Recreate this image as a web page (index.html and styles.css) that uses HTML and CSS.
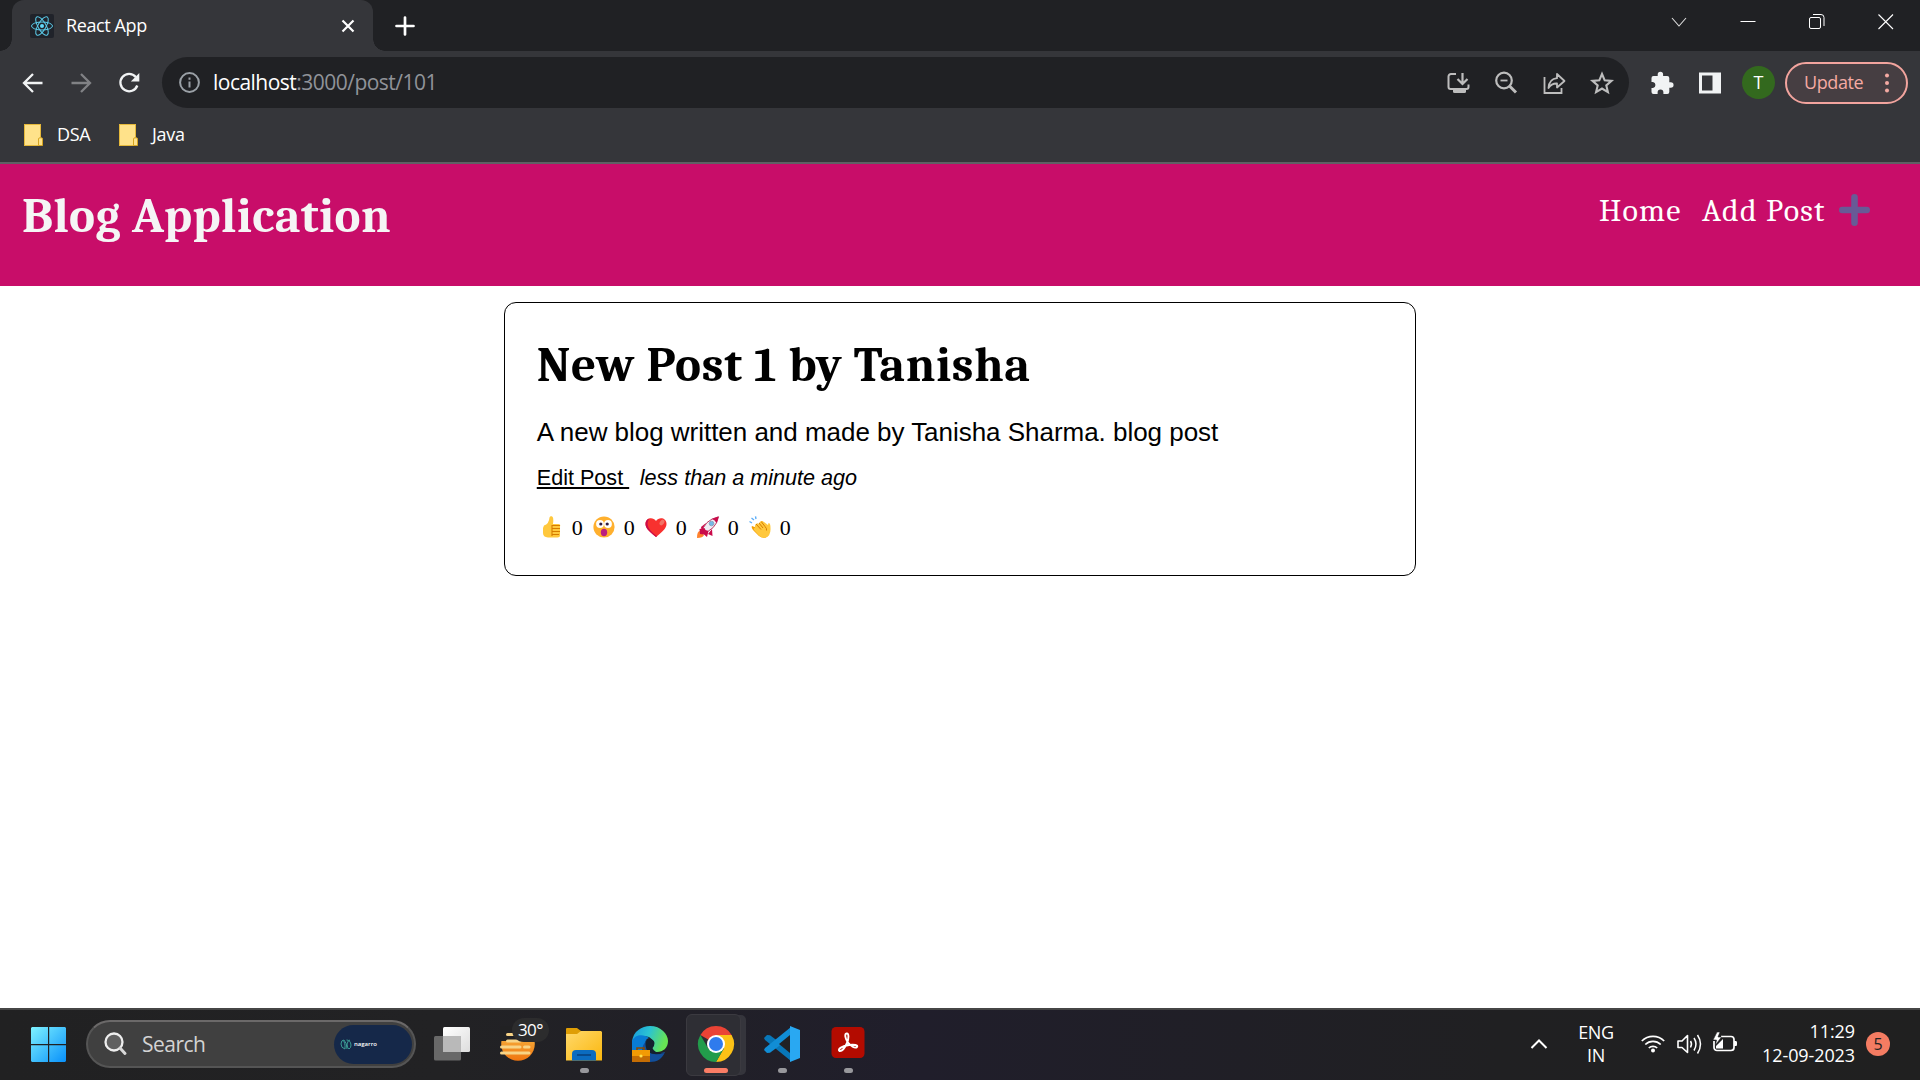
FILE: index.html
```html
<!DOCTYPE html>
<html lang="en">
<head>
<meta charset="utf-8">
<title>React App</title>
<link rel="stylesheet" href="styles.css">
</head>
<body>
<div class="screen">
  <div class="tabstrip">
    <div class="tab">
      <svg class="favicon" width="24" height="24" viewBox="0 0 24 24"><rect width="24" height="24" rx="2" fill="#20232a"/><g fill="none" stroke="#5ccfee" stroke-width="1"><ellipse cx="12" cy="12" rx="10.5" ry="4"/><ellipse cx="12" cy="12" rx="10.5" ry="4" transform="rotate(60 12 12)"/><ellipse cx="12" cy="12" rx="10.5" ry="4" transform="rotate(120 12 12)"/></g><circle cx="12" cy="12" r="2" fill="#61dafb"/></svg>
      <span class="tab-title">React App</span>
      <svg class="tab-close" width="14" height="14" viewBox="0 0 14 14"><path d="M1.5 1.5l11 11M12.500 1.500l-11 11" stroke="#fff" stroke-width="2.200"/></svg>
    </div>
    <svg class="newtab" width="20" height="20" viewBox="0 0 20 20"><path d="M10 1.500v17M1.500 10h17" stroke="#fff" stroke-width="2.700" stroke-linecap="round"/></svg>
    <div class="winctl">
      <svg width="16" height="16" viewBox="0 0 16 16"><path d="M1 4l7 8 7-8" fill="none" stroke="#ddd" stroke-width="1.100"/></svg>
      <svg width="16" height="16" viewBox="0 0 16 16"><path d="M.5 7.500h15" stroke="#fff"/></svg>
      <svg width="16" height="16" viewBox="0 0 16 16"><rect x=".5" y="3.500" width="11" height="11" rx="1.500" fill="none" stroke="#fff"/><path d="M4 .5h8a3 3 0 0 1 3 3V12" fill="none" stroke="#fff"/></svg>
      <svg width="16" height="16" viewBox="0 0 16 16"><path d="M.5.5l14.500 14.500M15 .5L.5 15" stroke="#fff" stroke-width="1.100"/></svg>
    </div>
  </div>
  <div class="toolbar">
    <div class="navbtn"><svg width="22" height="22" viewBox="0 0 22 22"><path d="M20.500 11H2.500M11 2L2 11l9 9" fill="none" stroke="#f1f3f4" stroke-width="2.300"/></svg></div>
    <div class="navbtn"><svg width="22" height="22" viewBox="0 0 22 22"><path d="M1.500 11h18M11 2l9 9-9 9" fill="none" stroke="#818285" stroke-width="2.300"/></svg></div>
    <div class="navbtn"><svg width="22" height="22" viewBox="0 0 22 22"><path d="M17.800 5A8.700 8.700 0 1 0 19.300 13.500" fill="none" stroke="#f1f3f4" stroke-width="2.300"/><path d="M21.300 1v8.500h-8.500z" fill="#f1f3f4"/></svg></div>
    <div class="omnibox">
      <svg width="21" height="21" viewBox="0 0 21 21"><circle cx="10.500" cy="10.500" r="9.400" fill="none" stroke="#9aa0a6" stroke-width="2"/><path d="M10.500 9.500v6M10.500 5.500v2.200" stroke="#9aa0a6" stroke-width="2"/></svg>
      <span class="url"><b class="host">localhost</b>:3000/post/101</span>
      <div class="omni-actions">
        <svg width="24" height="24" viewBox="0 0 24 24"><path d="M10 3H5a2.500 2.500 0 0 0-2.500 2.500V16A2 2 0 0 0 4.500 18h16a2 2 0 0 0 2-2v-2.500" fill="none" stroke="#bdbdbd" stroke-width="2"/><path d="M7 18h13v2.500a1.500 1.500 0 0 1-1.500 1.500h-10A1.500 1.500 0 0 1 7 20.500z" fill="#bdbdbd"/><path d="M16.500 2v10.500M11.500 8l5 5 5-5" fill="none" stroke="#bdbdbd" stroke-width="2.200"/></svg>
        <svg width="24" height="24" viewBox="0 0 24 24"><circle cx="10" cy="9.500" r="7.800" fill="none" stroke="#bdbdbd" stroke-width="2.200"/><path d="M15 14.500l7 7" stroke="#bdbdbd" stroke-width="3"/><path d="M6.500 9.500h7" stroke="#bdbdbd" stroke-width="1.800"/></svg>
        <svg width="24" height="24" viewBox="0 0 24 24"><path d="M2.500 6v16h17v-5" fill="none" stroke="#bdbdbd" stroke-width="1.800"/><path d="M6.500 17c.5-6 3-9.300 8.500-9.800V3l7.500 7-7.500 6.500v-4c-4-.2-6.500 1.300-8.500 4.500z" fill="none" stroke="#bdbdbd" stroke-width="1.800" stroke-linejoin="round"/></svg>
        <svg width="24" height="24" viewBox="0 0 24 24"><path d="M12 3l2.700 6.300 6.800.6-5.200 4.500 1.600 6.700-5.900-3.600-5.900 3.600 1.600-6.700L2.500 9.900l6.800-.6z" fill="none" stroke="#bdbdbd" stroke-width="2.100"/></svg>
      </div>
    </div>
    <div class="ext">
      <svg width="24" height="24" viewBox="0 0 24 24"><path d="M20.800 11.300h-1.500V7a2.100 2.100 0 0 0-2.100-2.100h-4.100V3.500a2.700 2.700 0 0 0-5.400 0v1.400H3.500A2.100 2.100 0 0 0 1.500 7v4h1.500a3 3 0 0 1 0 5.900H1.500V21a2 2 0 0 0 2 2h4.100v-1.500a2.900 2.900 0 0 1 5.800 0V23h3.900a2 2 0 0 0 2-2v-4.200h1.500a2.700 2.700 0 0 0 0-5.500z" fill="#f1f3f4"/></svg>
      <svg width="24" height="24" viewBox="0 0 24 24"><path d="M1 1.500h22v21H1zM4 4.500v15h10.500v-15z" fill="#f1f3f4" fill-rule="evenodd"/></svg>
      <span class="avatar">T</span>
    </div>
    <div class="update"><span class="update-label">Update</span><i class="dots"></i></div>
  </div>
  <div class="bookmarks">
    <svg class="folder" width="19" height="22" viewBox="0 0 19 22"><path d="M0 0h17v22H0z" fill="#e5b93b"/><path d="M1 1h15v20H1z" fill="#ffe28a"/><path d="M14.500 21.500V15q0-1.200 1.500-1.200h1.500q1 0 1 1.200v6.500z" fill="#ffe28a" stroke="#d6a522"/></svg><span class="bm dsa">DSA</span>
    <svg class="folder" width="19" height="22" viewBox="0 0 19 22"><path d="M0 0h17v22H0z" fill="#e5b93b"/><path d="M1 1h15v20H1z" fill="#ffe28a"/><path d="M14.500 21.500V15q0-1.200 1.500-1.200h1.500q1 0 1 1.200v6.500z" fill="#ffe28a" stroke="#d6a522"/></svg><span class="bm java">Java</span>
  </div>

  <main class="page">
    <header class="site-header">
      <h1 class="brand">Blog Application</h1>
      <nav class="site-nav"><span class="home">Home</span><span class="addpost">Add Post</span>
        <svg class="plus" width="31" height="32" viewBox="0 0 31 32"><path d="M15.500 3.300v25.400M3.300 16h24.400" stroke="#685a96" stroke-width="6.600" stroke-linecap="round"/></svg></nav>
    </header>
    <article class="post">
      <h2 class="post-title">New Post 1 by Tanisha</h2>
      <p class="excerpt">A new blog written and made by Tanisha Sharma. blog post</p>
      <p class="meta"><a class="edit">Edit Post&nbsp;</a><i class="ago">less than a minute ago</i></p>
      <div class="reactions">
        <span class="reaction"><svg width="22" height="22" viewBox="0 0 22 22"><path d="M3 9.500Q8 8 8.500 1.500 9-.2 10.800.3 13 1 12 8h5.500q2.300.3 1.500 2.500V19q0 2.500-2.500 2.500H7Q2 21 2 17v-5z" fill="#ffc83d"/><path d="M11 9.500h8M11 12.500h8M11 15.500h8M11 18.500h7M11 9v11" stroke="#d67d00" stroke-width="1.100"/></svg>0</span>
        <span class="reaction"><svg width="22" height="22" viewBox="0 0 22 22"><circle cx="11" cy="11" r="10.600" fill="#ffb02e"/><circle cx="7" cy="8" r="3.900" fill="#fff"/><circle cx="15" cy="8" r="3.900" fill="#fff"/><circle cx="7.800" cy="8" r="1.600" fill="#321b41"/><circle cx="14.200" cy="8" r="1.600" fill="#321b41"/><ellipse cx="11" cy="16.500" rx="3.200" ry="3.700" fill="#bb1d80"/></svg>0</span>
        <span class="reaction"><svg width="22" height="22" viewBox="0 0 22 22"><path d="M11 21C3 14.500.5 11.500.5 7.700.5 1.800 8 .3 11 5c3-4.700 10.500-3.200 10.500 2.700 0 3.800-2.500 6.800-10.500 13.300z" fill="#f8312f"/><path d="M11 21C3 14.500.5 11.500.5 7.700.5 5 2 3.200 4 2.700 0 10 5 15 12 20.200z" fill="#ca0b4a"/><ellipse cx="17" cy="6.500" rx="2" ry="3.200" fill="#f37366" transform="rotate(35 17 6.500)"/></svg>0</span>
        <span class="reaction"><svg width="22" height="22" viewBox="0 0 22 22"><path d="M0 22q0-7 3-7l4 4q-1 3-7 3z" fill="#ff822d"/><path d="M4 11l5-4-4 9zM11 18l4-5 .5 7z" fill="#ca0b4a"/><path d="M4.500 17.500Q7 4 21.500.8 19 14 5 17.500z" fill="#f0ecf4" stroke="#b72755" stroke-width=".9"/><path d="M15 3l6.500-2.500Q21 4.500 19.500 7 18 4 15 3zM2.500 13l5-1 1 2 3 1-1.500 6-3-2.500-4-.5z" fill="#ca0b4a"/><circle cx="14.500" cy="7.500" r="2.300" fill="#74b9e8" stroke="#8ba7be"/></svg>0</span>
        <span class="reaction"><svg width="22" height="22" viewBox="0 0 22 22"><path d="M3 10l5 2 3-6q2-2 3 0l5 6q3 7-2 9.500-4 1-7-1.500L4 14q-2-3-1-4z" fill="#f59f00"/><path d="M7 8q1.500-1.500 3 0 0-2 2-2 1-1.500 3 0l4 3 .5-2q2 0 2 5 .5 8-5 9.500-4 .8-6.500-2L5 14q-1-2 1-2-.5-3 1-4z" fill="#ffc83d"/><path d="M7 8l5 5.500M10 7l4 5M12.500 6l3.500 4.500q2 2 1.500 4" fill="none" stroke="#d67d00"/><path d="M.5 5.500L3 7M2.500 2L5 4M6.500.3L7 3" stroke="#5eaef7" stroke-width="1.400"/></svg>0</span>
      </div>
    </article>
  </main>

  <footer class="taskbar">
    <svg class="start" width="35" height="35" viewBox="0 0 35 35"><defs><linearGradient id="win" x2="1" y2="1"><stop stop-color="#7ff3ff"/><stop offset="1" stop-color="#0890fa"/></linearGradient></defs><path d="M1 0h16v17H0V1zM18.200 0H34l1 1v16H18.200zM0 18.200h17V35H1l-1-1zM18.200 18.200H35V34l-1 1H18.200z" fill="url(#win)"/></svg>
    <div class="search">
      <svg width="24" height="24" viewBox="0 0 24 24"><circle cx="11" cy="10" r="8.500" fill="#606060" stroke="#eee" stroke-width="2.300"/><path d="M17 16l5 5.500" stroke="#d8d8d8" stroke-width="3" stroke-linecap="round"/></svg>
      <span class="search-label">Search</span>
      <div class="search-chip"><svg width="12" height="11" viewBox="0 0 12 11"><path d="M2.500 1q3 2 2.500 9-4-1-4-5t3-4q3 3 3 9M6.500 1q4 0 4.500 5 0 3-2 4-2-1-2-5 1-4 3-4" fill="none" stroke="#3c9c94"/></svg><span class="chip-text">nagarro</span></div>
    </div>
    <div class="apps">
      <div class="app"><svg width="36" height="36" viewBox="0 0 36 36"><defs><linearGradient id="tv" x2="1" y2="1"><stop stop-color="#fff"/><stop offset="1" stop-color="#ddd"/></linearGradient></defs><rect x="9" y="1" width="27" height="25" rx="1.500" fill="url(#tv)"/><rect y="10" width="27" height="24.500" rx="1.500" fill="#777" opacity=".82"/><path d="M9 10h18v16H9z" fill="#b9b9b9"/></svg></div>
      <div class="app weather"><svg width="36" height="36" viewBox="0 0 36 36"><defs><linearGradient id="sun" x2="0" y2="1"><stop stop-color="#f8c34c"/><stop offset="1" stop-color="#f0750f"/></linearGradient></defs><circle cx="18" cy="18" r="16.800" fill="url(#sun)"/><path d="M0 0h36v15H0z" fill="#212123"/><path d="M7.500 8.500H19M7.500 15H20M1.500 21H20M24.500 21h4.500M1.500 27H29" stroke="#f8d486" stroke-width="3" stroke-linecap="round"/></svg><span class="temp">30°</span></div>
      <div class="app run"><svg width="36" height="36" viewBox="0 0 36 36"><defs><linearGradient id="fold" x2="1" y2="1"><stop stop-color="#ffd96b"/><stop offset="1" stop-color="#fbb70e"/></linearGradient></defs><path d="M0 3q0-1 1-1h10l4 3v5H0z" fill="#df9e05"/><path d="M0 8h11l4-3h20l1 1v28.500H0z" fill="url(#fold)"/><path d="M6 34.500V28q0-4 4-4h16q4 0 4 4v6.500z" fill="#0b6cc0"/><path d="M11 29h14" stroke="#08427f" stroke-width="1.600"/></svg></div>
      <div class="app"><svg width="36" height="36" viewBox="0 0 36 36"><defs><linearGradient id="edge" x2="1" y2=".3"><stop stop-color="#1699df"/><stop offset=".5" stop-color="#2bc3d2"/><stop offset="1" stop-color="#67e454"/></linearGradient></defs><path d="M0 16C1 5 10 0 18 0c11 0 18 8 18 15 0 7-5 11-11 11-4 0-6-2-5-4 3-3 2-8-3-11Q8 8 0 16z" fill="url(#edge)"/><path d="M0 28V15C3 8 12 8 17 12c-5 1-5 8 1 13v9Q7 38 0 28z" fill="#087cd5"/><path d="M15 14c-2 9 8 16 18 12-3 7-8 10-15 10-8 0-12-13-3-22z" fill="#124f9b"/><path d="M13.500 18a4.500 4.500 0 0 1 9-1q0 3-2 5 2 6 12 5-11 3-16-1-3-3-3-8z" fill="#14202f"/><path d="M0 24h18v12H0z" fill="#c56d04"/><path d="M0 24h18v6H0z" fill="#f29b05"/><path d="M5 24v-2h7v2" fill="none" stroke="#8b4900" stroke-width="1.600"/><circle cx="9" cy="30" r="1.600" fill="#ffe04b"/></svg></div>
      <div class="app active"><svg width="36" height="36" viewBox="0 0 36 36"><path d="M18 18L2.400 9A18 18 0 0 1 33.600 9z" fill="#ea4335"/><path d="M18 9h15.600A18 18 0 0 1 18 36l7.800-13.500z" fill="#fbc116"/><path d="M2.400 9A18 18 0 0 0 18 36l7.800-13.500H10.200z" fill="#229c4b"/><circle cx="18" cy="18" r="9" fill="#fff"/><circle cx="18" cy="18" r="7" fill="#2f7bed"/></svg></div>
      <div class="app run"><svg width="36" height="36" viewBox="0 0 36 36"><path d="M0 12l3-3 3 .2L27 25v10L1 14z" fill="#0877b9"/><path d="M0 24l3 3 3-.2L27 11V1L1 22z" fill="#118dd5"/><path d="M26 0l10 4v28l-10 4z" fill="#29a8f2"/><path d="M15 18l11-9v18z" fill="#202124"/></svg></div>
      <div class="app run"><svg width="36" height="36" viewBox="0 0 36 36"><rect x="1.500" y="1" width="33" height="31" rx="4.500" fill="#b30b00"/><path d="M16.500 7.500c2.500-1 2.500 5 .5 9.500-2 4.500-5 8.500-7.500 8-2.500-2 3-5 9.500-6 5-.8 9.500 0 8 2-2 2-6.500-1-9.500-5-2.500-4-3-8-1-8.500z" fill="none" stroke="#fff" stroke-width="1.900"/></svg></div>
    </div>
    <div class="tray">
      <svg class="tray-up" width="18" height="12" viewBox="0 0 18 12"><path d="M1.500 10l7.500-7.500 7.500 7.500" fill="none" stroke="#fff" stroke-width="2"/></svg>
      <div class="lang">ENG<br>IN</div>
      <div class="status">
        <svg width="24" height="20" viewBox="0 0 24 20"><path d="M.8 7a16 16 0 0 1 22.400 0M4.300 10.500a11 11 0 0 1 15.400 0M7.800 14a6 6 0 0 1 8.400 0" fill="none" stroke="#fff" stroke-width="1.700"/><circle cx="12" cy="16.500" r="2" fill="#fff"/></svg>
        <svg width="24" height="20" viewBox="0 0 24 20"><path d="M1 7h4l5.500-5.500v17L5 13.500H1z" fill="none" stroke="#fff" stroke-width="1.600" stroke-linejoin="round"/><path d="M13.500 7q2 3 0 6.500M17 4q4 6 0 12.500M20.500 1q6 9 0 18.500" fill="none" stroke="#fff" stroke-width="1.500"/></svg>
        <svg width="24" height="20" viewBox="0 0 24 20"><path d="M8 2.500h10a3 3 0 0 1 3 3v8a3 3 0 0 1-3 3H4a3 3 0 0 1-3-3V7" fill="none" stroke="#fff" stroke-width="1.700"/><path d="M21 7h2q1 0 1 1.500v2q0 1.500-1 1.500h-2zM3 14.500V12l7-7v9.500z" fill="#fff"/><path d="M4-2L0 6h3.500L2.500 11 8.500 3H5L7-2z" fill="#fff" stroke="#202124" stroke-width=".6"/></svg>
      </div>
      <div class="clock"><span class="time">11:29</span><br><span class="date">12-09-2023</span></div>
      <span class="badge">5</span>
    </div>
  </footer>
</div>
</body>
</html>
```
FILE: styles.css
```css
* { box-sizing: border-box; }
body, h1, h2, p { margin: 0; }
body { background: #fff; font-family: "Open Sans", "Noto Sans", sans-serif; font-size: 18px; color: #fff; }
svg { display: block; flex: none; overflow: visible; }
span { white-space: nowrap; }
.screen { width: 1920px; height: 1080px; display: flex; flex-direction: column; overflow: hidden; }

/* Browser window */
.tabstrip { height: 51px; background: #202124; display: flex; align-items: flex-start; }
.tab { width: 361px; height: 51px; margin-left: 12px; padding: 0 18px; background: #35363a; border-radius: 12px 12px 0 0; display: flex; align-items: center; position: relative; }
.tab::before, .tab::after { content: ""; position: absolute; bottom: 0; width: 12px; height: 12px; }
.tab::before { left: -12px; background: radial-gradient(circle at 0 0, #202124 11.500px, #35363a 12px); }
.tab::after { right: -12px; background: radial-gradient(circle at 100% 0, #202124 11.500px, #35363a 12px); }
.tab-title { margin-left: 12px; flex: 1; font-size: 18px; letter-spacing: -.4px; padding-bottom: 1px; }
.newtab { margin: 16px 0 0 22px; }
.winctl { margin-left: auto; display: flex; height: 43px; }
.winctl svg { margin: 14px 26.500px 0; }
.toolbar { height: 63px; background: #35363a; display: flex; align-items: center; padding-left: 9px; }
.navbtn { width: 48px; display: flex; justify-content: center; }
.omnibox { width: 1467px; height: 51px; margin-left: 9px; padding: 0 3px 0 17px; background: #202124; border-radius: 26px; display: flex; align-items: center; }
.url { margin-left: 13px; color: #909399; font-size: 21px; letter-spacing: -.52px; padding-bottom: 1px; }
.host { font-weight: 400; color: #fff; }
.omni-actions { display: flex; margin-left: auto; }
.omni-actions svg { margin: 0 12px; }
.ext { width: 156px; padding-left: 21px; display: flex; align-items: center; gap: 24px; }
.ext .avatar { margin-left: -4px; width: 33px; height: 33px; border-radius: 50%; background: #33691e; font-size: 18px; line-height: 33px; text-align: center; flex: none; }
.update { width: 123px; height: 42px; border: 2px solid #f2a49e; border-radius: 21px; background: #463e42; color: #f5aaa3; display: flex; align-items: center; padding: 0 17px 0 17px; justify-content: space-between; }
.update-label { font-size: 18px; letter-spacing: -.4px; padding-bottom: 1px; }
.dots { width: 4px; height: 4px; border-radius: 50%; background: #f5aaa3; box-shadow: 0 -7.500px #f5aaa3, 0 7.500px #f5aaa3; }
.bookmarks { height: 50px; background: #35363a; border-bottom: 2px solid #5f6064; display: flex; align-items: center; padding: 0 24px 6px; }
.bm { margin-left: 14px; padding-bottom: 2px; }
.dsa { width: 62px; letter-spacing: -.4px; }
.java { letter-spacing: -.3px; }

/* Blog page */
.page { height: 844px; background: #fff; }
.site-header { height: 122px; background: #c80d69; padding: 24px 50px 0 22px; display: flex; justify-content: space-between; align-items: flex-start; font-family: Caladea, "Liberation Serif", serif; }
.brand { font-size: 49px; line-height: 56px; color: #f5f5f5; white-space: nowrap; letter-spacing: .4px; }
.site-nav { display: flex; margin-top: 3px; font-size: 32px; line-height: 40px; letter-spacing: 1.2px; }
.home { width: 103px; }
.addpost { width: 137px; }
.plus { margin-top: 3px; }
.post { width: 912.500px; height: 274px; margin: 16px auto 0; border: 1px solid #000; border-radius: 12px; color: #000; padding: 34px 30px 0 32px; font-family: "Liberation Sans", sans-serif; }
.post-title { font: bold 49px/56px Caladea, "Liberation Serif", serif; letter-spacing: .66px; white-space: nowrap; }
.excerpt { margin-top: 23px; font-size: 26px; letter-spacing: -.03px; line-height: 32px; white-space: nowrap; }
.meta { margin-top: 18px; font-size: 21.600px; line-height: 24px; display: flex; }
.edit { width: 92px; text-decoration: underline; text-decoration-thickness: 2px; text-underline-offset: 2px; margin-right: 11px; white-space: nowrap; }
.ago { white-space: nowrap; }
.reactions { margin-top: 25px; display: flex; font: 22px/26px "Liberation Serif", serif; padding-left: 4px; }
.reaction { width: 52px; display: flex; gap: 9px; flex: none; }
.reaction svg { margin-top: 1px; }

/* Desktop taskbar */
.taskbar { height: 72px; background: linear-gradient(90deg, #212122 0, #222224 23%, #201e2b 48%, #202022 78%, #202020); border-top: 2px solid #464646; display: flex; align-items: center; padding: 0 0 2px 31px; }
.search { width: 330px; height: 48px; margin-left: 20px; padding: 0 2px 0 15px; border: 2px solid #555; border-top-color: #6b6969; border-radius: 24px; background: #404040; display: flex; align-items: center; }
.search-label { margin-left: 15px; font-size: 21px; color: #d3d3d3; letter-spacing: -.5px; }
.search-chip { width: 78px; height: 39px; border-radius: 20px; margin-left: auto; background: #152849; display: flex; align-items: center; padding-left: 6px; gap: 2px; }
.chip-text { font-size: 6px; font-weight: 600; line-height: 10px; }
.apps { display: flex; margin-left: 3px; }
.app { width: 66px; height: 60px; display: flex; justify-content: center; align-items: center; position: relative; }
.temp { position: absolute; left: 27px; top: 4px; width: 37px; height: 24px; border-radius: 12px; background: #2c2c2d; font-size: 17px; line-height: 24px; text-align: center; letter-spacing: -.5px; }
.run::after, .active::after { content: ""; position: absolute; bottom: 1px; width: 9px; height: 5px; border-radius: 3px; background: #98989c; }
.active::after { width: 24px; background: #fa7d65; }
.active::before { content: ""; position: absolute; left: 3px; top: 0; width: 53px; height: 60px; border-radius: 6px; background: #2e2e34; border: 1px solid #3b3a40; box-shadow: 6px 0 0 -1px #35353c; }
.active svg { position: relative; }
.tray { margin-left: auto; display: flex; align-items: center; padding-right: 30px; }
.lang { width: 60px; margin-left: 18px; text-align: center; font-size: 18px; line-height: 23px; letter-spacing: -.4px; }
.status { display: flex; gap: 12px; margin-left: 15px; }
.clock { width: 118px; margin-top: -2px; text-align: right; font-size: 18px; line-height: 24px; letter-spacing: -.1px; }
.badge { width: 24px; height: 24px; margin-left: 11px; border-radius: 50%; background: #f47c62; color: #222; font-size: 16px; line-height: 24px; text-align: center; }
```
